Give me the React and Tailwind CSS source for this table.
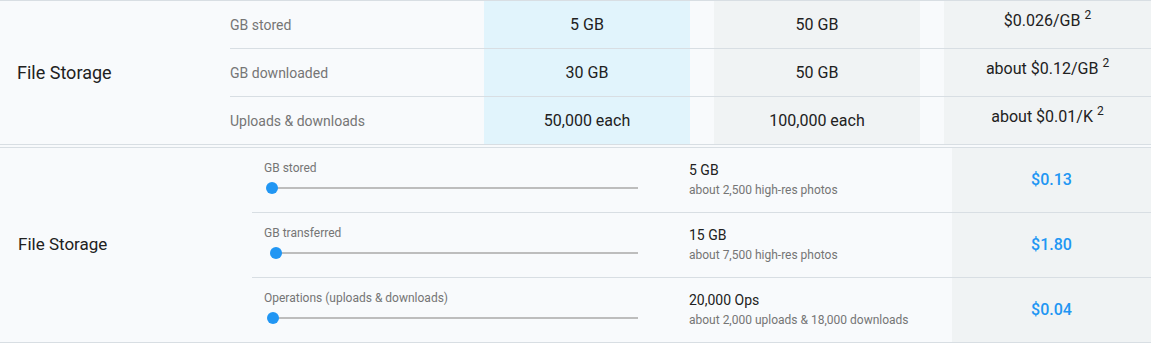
const quota = [
  { label: 'GB stored', free: '5 GB', paid: '50 GB', price: '$0.026/GB' },
  { label: 'GB downloaded', free: '30 GB', paid: '50 GB', price: 'about $0.12/GB' },
  { label: 'Uploads & downloads', free: '50,000 each', paid: '100,000 each', price: 'about $0.01/K' },
]

const usage = [
  { label: 'GB stored', thumb: 'left-[2px]', value: '5 GB', note: 'about 2,500 high-res photos', cost: '$0.13' },
  { label: 'GB transferred', thumb: 'left-[6px]', value: '15 GB', note: 'about 7,500 high-res photos', cost: '$1.80' },
  { label: 'Operations (uploads & downloads)', thumb: 'left-[3px]', value: '20,000 Ops', note: 'about 2,000 uploads & 18,000 downloads', cost: '$0.04' },
]

function Slider({ thumb }) {
  return (
    <div className="relative h-3 flex items-center pl-[8px]">
      <div className="h-[2px] w-full bg-[#bdbdbd]" />
      <div className={`absolute top-0 ${thumb} w-3 h-3 rounded-full bg-[#2196f3]`} />
    </div>
  )
}

export default function App() {
  return (
    <div className="w-[1151px] h-[343px] bg-[#f8fafc] font-['Roboto',sans-serif] text-[#212121]">
      {/* plan comparison */}
      <div className="flex border-t border-b border-[#d8dee3]">
        <div className="w-[230px] flex items-center pl-[17px] text-[18px]">File Storage</div>
        <div className="flex-1 flex flex-col">
          {quota.map((row, i) => (
            <div key={row.label} className={`flex h-12 ${i < 2 ? 'border-b border-[#d8dee3]' : 'h-[47px]'}`}>
              <div className="w-[254px] flex items-center text-sm text-[#757575]">{row.label}</div>
              <div className="w-[206px] flex items-center justify-center text-base bg-[#e1f4fc]">{row.free}</div>
              <div className="w-6" />
              <div className="w-[206px] flex items-center justify-center text-base bg-[#f0f3f4]">{row.paid}</div>
              <div className="w-6" />
              <div className="flex-1 flex items-center justify-center pb-2 text-base bg-[#f0f3f4]">
                {row.price}
                <sup className="ml-1 text-xs">2</sup>
              </div>
            </div>
          ))}
        </div>
      </div>

      {/* cost calculator */}
      <div className="mt-[2px] flex border-t border-b border-[#d8dee3]">
        <div className="w-[252px] flex items-center pl-[18px] text-[17px]">File Storage</div>
        <div className="flex-1 flex flex-col">
          {usage.map((row, i) => (
            <div key={row.label} className={`flex ${i < 2 ? 'h-[65px] border-b border-[#d8dee3]' : 'h-[64px]'}`}>
              <div className="w-[398px] px-3 pt-3">
                <div className="text-xs leading-4 text-[#757575]">{row.label}</div>
                <div className="mt-1.5">
                  <Slider thumb={row.thumb} />
                </div>
              </div>
              <div className="flex-1 pl-[39px] flex flex-col justify-center">
                <div className="text-sm leading-5">{row.value}</div>
                <div className="text-xs leading-5 text-[#757575]">{row.note}</div>
              </div>
              <div className="w-[199px] flex items-center justify-center bg-[#f0f3f4] text-base font-medium text-[#2196f3]">
                {row.cost}
              </div>
            </div>
          ))}
        </div>
      </div>
    </div>
  )
}
